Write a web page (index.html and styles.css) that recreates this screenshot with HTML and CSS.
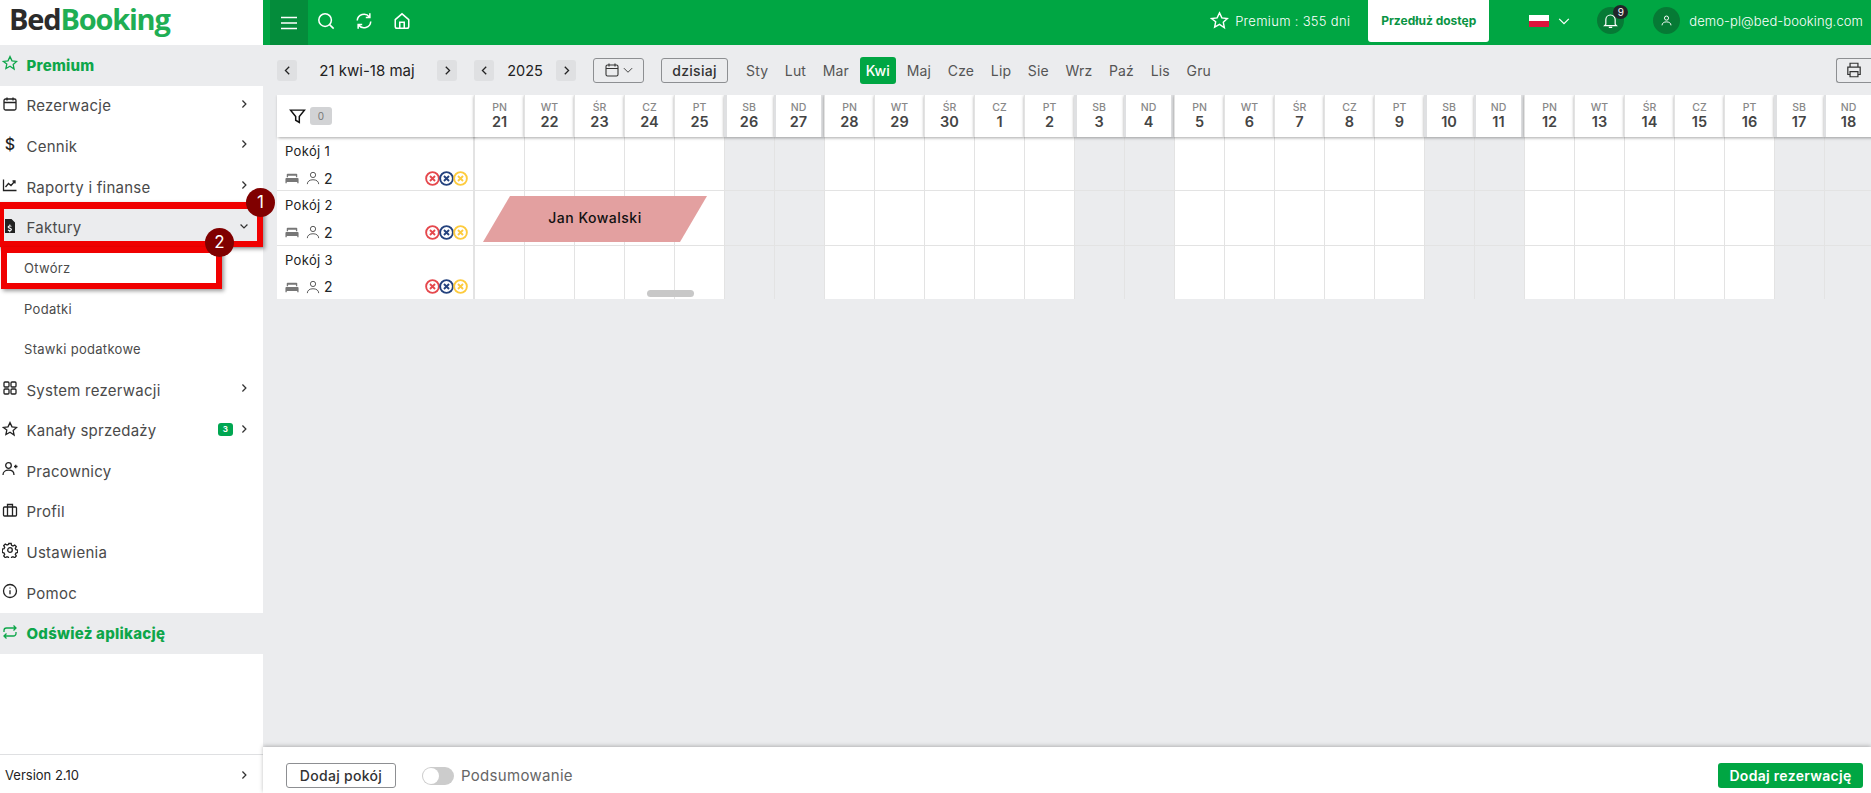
FILE: index.html
```html
<!DOCTYPE html>
<html lang="pl">
<head>
    <meta charset="UTF-8">
    <meta name="viewport" content="width=device-width, initial-scale=1.0">
    <title>BedBooking</title>
    <link rel="stylesheet" href="styles.css">
</head>
<body>
<svg class="sprite" width="0" height="0">
    <defs>
        <symbol id="i-star" viewBox="0 0 16 16"><path d="M8 1.600l2 4.200 4.600.6-3.400 3.100.9 4.600L8 11.300l-4.100 2.300.9-4.600L1.400 6.400 6 5.800z"/></symbol>
        <symbol id="i-calendar" viewBox="0 0 16 16"><rect x="2" y="3" width="12" height="11" rx="1.500"/><path d="M2 6.500h12M5 1.500v3M11 1.500v3"/></symbol>
        <symbol id="i-chart" viewBox="0 0 16 16"><path d="M1.500 2.500v11h13M3.500 10l3-3.500 2.500 2 4-4.500M10.500 4h2.500v2.500"/></symbol>
        <symbol id="i-grid" viewBox="0 0 16 16"><rect x="2" y="2" width="5" height="5" rx="1"/><rect x="9" y="2" width="5" height="5" rx="1"/><rect x="2" y="9" width="5" height="5" rx="1"/><rect x="9" y="9" width="5" height="5" rx="1"/></symbol>
        <symbol id="i-user-plus" viewBox="0 0 16 16"><circle cx="6.500" cy="4.500" r="2.800"/><path d="M1 14c0-3 2.400-4.800 5.500-4.800S12 11 12 14M12 5.500h3.500M13.750 3.750v3.500"/></symbol>
        <symbol id="i-case" viewBox="0 0 16 16"><rect x="1.500" y="5" width="13" height="9" rx="1"/><path d="M5.500 14V2.500h5V14"/></symbol>
        <symbol id="i-gear" viewBox="0 0 16 16"><circle cx="8" cy="8" r="2.300"/><path d="M6.800 1.500h2.400l.4 1.900 1.400.6 1.700-1 1.600 1.700-1 1.600.6 1.400 1.800.5v2.300l-1.800.5-.6 1.400 1 1.600-1.600 1.700-1.700-1-1.400.6-.4 1.800H6.800l-.4-1.800-1.400-.6-1.700 1-1.600-1.700 1-1.600-.6-1.400-1.800-.5V7.200l1.800-.5.6-1.400-1-1.600 1.600-1.700 1.700 1 1.400-.6z"/></symbol>
        <symbol id="i-info" viewBox="0 0 16 16"><circle cx="8" cy="8" r="6.500"/><path d="M8 7.200v4M8 4.600v1"/></symbol>
        <symbol id="i-repeat" viewBox="0 0 16 16"><path d="M2 8V6.500A2.500 2.500 0 0 1 4.500 4H14M11.500 1.500L14 4l-2.500 2.500M14 8v1.500A2.500 2.500 0 0 1 11.500 12H2M4.500 9.500L2 12l2.500 2.500"/></symbol>
        <symbol id="i-bed" viewBox="0 0 16 16"><path d="M3 3h10a1 1 0 0 1 1 1v3h-1.500V5.500h-9V7H2V4a1 1 0 0 1 1-1zM1.500 8h13A1 1 0 0 1 15.500 9v5H14v-1.500H2V14H.5V9a1 1 0 0 1 1-1z"/></symbol>
        <symbol id="i-person" viewBox="0 0 16 16"><circle cx="8" cy="4.500" r="3"/><path d="M1.500 15c0-3.300 2.800-5 6.500-5s6.500 1.700 6.500 5"/></symbol>
        <symbol id="i-x" viewBox="0 0 16 16"><circle cx="8" cy="8" r="6.800"/><path d="M5.300 5.300l5.400 5.400M10.700 5.300l-5.400 5.400"/></symbol>
        <symbol id="i-right" viewBox="0 0 16 16"><path d="M5.500 2.500L11 8l-5.500 5.500"/></symbol>
        <symbol id="i-left" viewBox="0 0 16 16"><path d="M10.500 2.500L5 8l5.500 5.500"/></symbol>
        <symbol id="i-down" viewBox="0 0 16 16"><path d="M2.500 5.500L8 11l5.500-5.500"/></symbol>
    </defs>
</svg>

<div class="app">
    <aside class="sidebar">
        <div class="logo"><span class="logo-bed">Bed</span><span class="logo-booking">Booking</span></div>
        <nav class="menu">
            <a class="menu-item highlight"><svg class="ico"><use href="#i-star"/></svg><span class="menu-label">Premium</span></a>
            <a class="menu-item"><svg class="ico"><use href="#i-calendar"/></svg><span class="menu-label">Rezerwacje</span><svg class="caret"><use href="#i-right"/></svg></a>
            <a class="menu-item"><span class="ico dollar">$</span><span class="menu-label">Cennik</span><svg class="caret"><use href="#i-right"/></svg></a>
            <a class="menu-item"><svg class="ico"><use href="#i-chart"/></svg><span class="menu-label">Raporty i finanse</span><svg class="caret"><use href="#i-right"/></svg></a>
            <a class="menu-item open"><svg class="ico" viewBox="0 0 16 16"><path class="solid" d="M3 1h6.500L13 4.500V15H3zM7.300 6.500v1c-1 .2-1.600.8-1.600 1.600 0 1 .8 1.400 1.900 1.700.8.200 1 .4 1 .7 0 .4-.4.600-1 .6-.5 0-1-.2-1.400-.5l-.5 1c.4.300.9.500 1.500.6v1h1.100v-1c1-.2 1.700-.8 1.700-1.700 0-1-.8-1.500-1.900-1.800-.8-.2-1-.3-1-.6 0-.3.300-.5.800-.5.400 0 .8.100 1.200.4l.5-1c-.4-.3-.8-.4-1.300-.5v-1z" fill-rule="evenodd"/></svg><span class="menu-label">Faktury</span><svg class="caret"><use href="#i-down"/></svg></a>
            <a class="menu-sub">Otwórz</a>
            <a class="menu-sub">Podatki</a>
            <a class="menu-sub">Stawki podatkowe</a>
            <a class="menu-item"><svg class="ico"><use href="#i-grid"/></svg><span class="menu-label">System rezerwacji</span><svg class="caret"><use href="#i-right"/></svg></a>
            <a class="menu-item"><svg class="ico"><use href="#i-star"/></svg><span class="menu-label">Kanały sprzedaży</span><span class="count">3</span><svg class="caret near"><use href="#i-right"/></svg></a>
            <a class="menu-item"><svg class="ico"><use href="#i-user-plus"/></svg><span class="menu-label">Pracownicy</span></a>
            <a class="menu-item"><svg class="ico"><use href="#i-case"/></svg><span class="menu-label">Profil</span></a>
            <a class="menu-item"><svg class="ico"><use href="#i-gear"/></svg><span class="menu-label">Ustawienia</span></a>
            <a class="menu-item"><svg class="ico"><use href="#i-info"/></svg><span class="menu-label">Pomoc</span></a>
            <a class="menu-item highlight"><svg class="ico"><use href="#i-repeat"/></svg><span class="menu-label">Odśwież aplikację</span></a>
        </nav>
        <div class="version"><span>Version 2.10</span><svg class="caret"><use href="#i-right"/></svg></div>
        <div class="mark mark-one"><span class="mark-num">1</span></div>
        <div class="mark mark-two"><span class="mark-num">2</span></div>
    </aside>

    <div class="main">
        <header class="topbar">
            <div class="burger"><svg viewBox="0 0 18 14"><path d="M1 1.500h16M1 7h16M1 12.500h16"/></svg></div>
            <svg class="top-ico" viewBox="0 0 20 20"><circle cx="9" cy="9" r="7"/><path d="M14 14l4.500 4.500"/></svg>
            <svg class="top-ico" viewBox="0 0 20 20"><path d="M2.500 9.500A7.500 7.500 0 0 1 16 5.500M17.500 10.500A7.500 7.500 0 0 1 4 14.500M16.500 1.500v4.500H12M3.500 18.500V14H8"/></svg>
            <svg class="top-ico" viewBox="0 0 20 20"><path d="M2.500 8.500L10 2l7.500 6.500V16a2 2 0 0 1-2 2h-11a2 2 0 0 1-2-2zM7.500 18v-6.500h5V18"/></svg>
            <div class="spacer"></div>
            <svg class="top-star"><use href="#i-star"/></svg>
            <span class="premium-days">Premium : 355 dni</span>
            <a class="extend">Przedłuż dostęp</a>
            <span class="flag"></span>
            <svg class="flag-caret"><use href="#i-down"/></svg>
            <div class="bell">
                <svg viewBox="0 0 20 20"><path d="M4.500 14.500V9a5.500 5.500 0 0 1 11 0v5.500l1.500 1.500H3zM8 18h4"/></svg>
                <span class="bell-num">9</span>
            </div>
            <div class="avatar"><svg><use href="#i-person"/></svg></div>
            <span class="user-mail">demo-pl@bed-booking.com</span>
        </header>

        <div class="toolbar">
            <button class="nav-btn"><svg><use href="#i-left"/></svg></button>
            <span class="range">21 kwi-18 maj</span>
            <button class="nav-btn"><svg><use href="#i-right"/></svg></button>
            <button class="nav-btn year-prev"><svg><use href="#i-left"/></svg></button>
            <span class="year">2025</span>
            <button class="nav-btn"><svg><use href="#i-right"/></svg></button>
            <button class="outline-btn cal-btn"><svg class="cal-ico"><use href="#i-calendar"/></svg><svg class="cal-caret"><use href="#i-down"/></svg></button>
            <button class="outline-btn today">dzisiaj</button>
            <div class="months" id="months"></div>
            <div class="spacer"></div>
            <button class="outline-btn print"><svg viewBox="0 0 16 16"><path d="M4.500 5.500V2h7v3.500M4.500 12H2.500V5.500h11V12h-2M4.500 9.500h7V14h-7z"/></svg></button>
        </div>

        <div class="calendar">
            <div class="room-col">
                <div class="filter-cell">
                    <svg viewBox="0 0 16 16"><path d="M1.500 2h13L9.700 8v5.500l-3.400-2V8z"/></svg>
                    <span class="filter-count">0</span>
                </div>
                <div id="rooms"></div>
            </div>
            <div class="days" id="days"></div>
            <div class="booking">Jan Kowalski</div>
            <div class="scroll-thumb"></div>
        </div>

        <footer class="bottom">
            <button class="outline-btn add-room">Dodaj pokój</button>
            <span class="switch"><span class="switch-knob"></span></span>
            <span class="switch-label">Podsumowanie</span>
            <div class="spacer"></div>
            <button class="add-booking">Dodaj rezerwację</button>
        </footer>
    </div>
</div>

<script>
    const months = ['Sty', 'Lut', 'Mar', 'Kwi', 'Maj', 'Cze', 'Lip', 'Sie', 'Wrz', 'Paź', 'Lis', 'Gru'];
    const monthBox = document.getElementById('months');
    for (let name of months) {
        let item = document.createElement('span');
        item.className = name === 'Kwi' ? 'month active' : 'month';
        item.textContent = name;
        monthBox.appendChild(item);
    }

    const rooms = document.getElementById('rooms');
    for (let nr of [1, 2, 3]) {
        let row = document.createElement('div');
        row.className = 'room';
        row.innerHTML = '<div class="room-name">Pokój ' + nr + '</div>' +
            '<div class="room-info"><svg class="bed"><use href="#i-bed"/></svg>' +
            '<svg class="guest"><use href="#i-person"/></svg><span class="guest-num">2</span>' +
            '<span class="room-marks"><svg class="x red"><use href="#i-x"/></svg>' +
            '<svg class="x navy"><use href="#i-x"/></svg><svg class="x yellow"><use href="#i-x"/></svg></span></div>';
        rooms.appendChild(row);
    }

    const names = ['PN', 'WT', 'ŚR', 'CZ', 'PT', 'SB', 'ND'];
    const dayNums = [21, 22, 23, 24, 25, 26, 27, 28, 29, 30, 1, 2, 3, 4, 5, 6, 7, 8, 9, 10, 11, 12, 13, 14, 15, 16, 17, 18];
    const days = document.getElementById('days');
    dayNums.forEach(function (nr, i) {
        let weekday = i % 7;
        let col = document.createElement('div');
        col.className = 'day';
        if (weekday === 5) {
            col.className += ' weekend saturday';
        }
        if (weekday === 6) {
            col.className += ' weekend sunday';
        }
        col.innerHTML = '<div class="day-head"><span class="day-name">' + names[weekday] + '</span>' +
            '<span class="day-nr">' + nr + '</span></div>' +
            '<div class="day-cell"></div><div class="day-cell"></div><div class="day-cell"></div>';
        days.appendChild(col);
    });
</script>
</body>
</html>
```

FILE: styles.css
```css
* {
  box-sizing: border-box;
}

html,
body {
  margin: 0;
  height: 100%;
  overflow: hidden;
}

body {
  font-family: "Inter", "Open Sans", sans-serif;
  color: #212529;
  background-color: #ebecee;
}

.sprite {
  display: block;
}

.spacer {
  flex: 1;
}

.app {
  display: flex;
  width: 1871px;
  height: 793px;
}

/* sidebar */

.sidebar {
  position: relative;
  display: flex;
  flex-direction: column;
  flex: none;
  width: 263px;
  background-color: #fff;
}

.logo {
  height: 45px;
  padding-left: 9px;
  font-family: "Open Sans", sans-serif;
  font-size: 29px;
  font-weight: 700;
  line-height: 38px;
  letter-spacing: -1.2px;
}

.logo-bed {
  color: #2b2b2b;
}

.logo-booking {
  color: #1fae54;
}

.menu {
  flex: 1;
}

.menu-item {
  display: flex;
  align-items: center;
  height: 40.6px;
  padding-right: 14px;
  color: #4a4a4a;
  font-size: 15px;
  letter-spacing: 0.25px;
}

.menu-item.highlight {
  background-color: #ebecee;
  color: #0ea64a;
  font-weight: 800;
}

.menu-item.open {
  background-color: #ebecee;
}

.ico {
  flex: none;
  width: 16px;
  height: 16px;
  margin: 0 8.5px 4px 2px;
  fill: none;
  stroke: #222;
  stroke-width: 1.3;
}

.highlight .ico {
  stroke: #0ea64a;
}

.ico .solid {
  fill: #222;
  stroke: none;
}

.dollar {
  color: #222;
  font-size: 16px;
  font-weight: 500;
  line-height: 16px;
  text-align: center;
}

.menu-label {
  flex: 1;
}

.caret {
  flex: none;
  width: 10px;
  height: 10px;
  margin-bottom: 4px;
  fill: none;
  stroke: #333;
  stroke-width: 2;
}

.caret.near {
  margin-left: 6px;
}

.count {
  width: 15px;
  height: 13px;
  margin-bottom: 2px;
  border-radius: 3px;
  background-color: #00a651;
  color: #fff;
  font-size: 8px;
  font-weight: 700;
  line-height: 13px;
  text-align: center;
}

.menu-sub {
  display: block;
  height: 40.6px;
  padding-left: 24px;
  color: #4a4a4a;
  font-size: 13px;
  line-height: 40px;
  letter-spacing: 0.3px;
}

.version {
  display: flex;
  align-items: center;
  justify-content: space-between;
  height: 39px;
  padding: 2px 14px 0 5px;
  border-top: 1px solid #dfe0e2;
  color: #222;
  font-size: 13px;
}

.version .caret {
  margin-bottom: 0;
}

.mark {
  position: absolute;
  border-style: solid;
  border-color: #f00000;
  box-shadow: 2px 2px 4px rgba(0, 0, 0, 0.4);
}

.mark-one {
  left: -3px;
  top: 202px;
  width: 266px;
  height: 45px;
  border-width: 7px 6px 6px 7px;
}

.mark-two {
  left: 1px;
  top: 247px;
  width: 221px;
  height: 42px;
  border-width: 6px;
}

.mark-num {
  position: absolute;
  width: 29px;
  height: 29px;
  border-radius: 50%;
  background-color: #800000;
  color: #fff;
  font-size: 17px;
  line-height: 29px;
  text-align: center;
}

.mark-one .mark-num {
  right: -18px;
  top: -21px;
}

.mark-two .mark-num {
  right: -18px;
  top: -25px;
}

/* top bar */

.main {
  display: flex;
  flex-direction: column;
  flex: 1;
  min-width: 0;
}

.topbar {
  display: flex;
  align-items: center;
  flex: none;
  height: 45px;
  padding: 0 8px 4px 7px;
  background-color: #00a643;
  color: #fff;
}

.burger {
  display: flex;
  align-items: center;
  justify-content: center;
  align-self: flex-start;
  width: 38px;
  height: 45px;
  margin-right: 9px;
  background-color: #048c3b;
}

.burger svg {
  width: 18px;
  height: 14px;
  fill: none;
  stroke: #fff;
  stroke-width: 1.5;
}

.top-ico {
  width: 18px;
  height: 18px;
  margin-right: 20px;
  fill: none;
  stroke: #fff;
  stroke-width: 1.7;
}

.top-star {
  width: 19px;
  height: 19px;
  margin-right: 6px;
  fill: none;
  stroke: #fff;
  stroke-width: 1.2;
}

.premium-days {
  margin-right: 18px;
  font-size: 13px;
  font-weight: 300;
  letter-spacing: 0.3px;
}

.extend {
  align-self: flex-start;
  width: 121px;
  height: 42px;
  border-radius: 0 0 3px 3px;
  background-color: #fff;
  color: #0a9444;
  font-size: 12px;
  font-weight: 700;
  line-height: 41px;
  text-align: center;
  white-space: nowrap;
}

.flag {
  width: 20px;
  height: 12px;
  margin-left: 40px;
  background: linear-gradient(#fff 50%, #dc143c 50%);
}

.flag-caret {
  width: 14px;
  height: 14px;
  margin-left: 8px;
  fill: none;
  stroke: #fff;
  stroke-width: 1.4;
}

.bell {
  position: relative;
  display: flex;
  align-items: center;
  justify-content: center;
  width: 27px;
  height: 27px;
  margin-left: 26px;
  border-radius: 50%;
  background-color: #067a35;
}

.bell svg {
  width: 17px;
  height: 17px;
  fill: none;
  stroke: #fff;
  stroke-width: 1.4;
}

.bell-num {
  position: absolute;
  top: -2px;
  right: -4px;
  width: 15px;
  height: 14px;
  border-radius: 50%;
  background-color: #212529;
  font-size: 10px;
  line-height: 14px;
  text-align: center;
}

.avatar {
  display: flex;
  align-items: center;
  justify-content: center;
  width: 27px;
  height: 27px;
  margin-left: 29px;
  border-radius: 50%;
  background-color: #067a35;
}

.avatar svg {
  width: 11px;
  height: 11px;
  fill: none;
  stroke: #fff;
  stroke-width: 1.4;
}

.user-mail {
  margin-left: 9px;
  font-size: 13px;
  font-weight: 300;
  letter-spacing: 0.1px;
}

/* toolbar */

.toolbar {
  display: flex;
  align-items: center;
  flex: none;
  height: 50px;
  padding-left: 14px;
}

button {
  padding: 0;
  font-family: inherit;
}

.nav-btn {
  display: flex;
  align-items: center;
  justify-content: center;
  width: 20px;
  height: 21px;
  border: 0;
  border-radius: 3px;
  background-color: #dfe0e2;
}

.nav-btn svg {
  width: 11px;
  height: 11px;
  fill: none;
  stroke: #222;
  stroke-width: 1.9;
}

.range {
  width: 140px;
  font-size: 15px;
  text-align: center;
  color: #222;
}

.year-prev {
  margin-left: 17px;
}

.year {
  width: 62px;
  font-size: 14.5px;
  text-align: center;
  color: #222;
}

.outline-btn {
  border: 1px solid #8d8f92;
  border-radius: 3px;
  background-color: transparent;
  color: #333;
}

.cal-btn {
  display: flex;
  align-items: center;
  justify-content: center;
  width: 51px;
  height: 25px;
  margin-left: 17px;
}

.cal-ico {
  width: 16px;
  height: 16px;
  fill: none;
  stroke: #333;
  stroke-width: 1.1;
}

.cal-caret {
  width: 12px;
  height: 12px;
  margin-left: 2px;
  fill: none;
  stroke: #333;
  stroke-width: 1.2;
}

.today {
  width: 67px;
  height: 25px;
  margin-left: 17px;
  font-size: 14px;
  font-weight: 500;
  letter-spacing: 0.3px;
}

.months {
  display: flex;
  align-items: center;
  gap: 4.7px;
  margin-left: 12px;
}

.month {
  padding: 5px 6px;
  border-radius: 3px;
  color: #555;
  font-size: 14px;
  line-height: 17px;
  letter-spacing: 0.15px;
}

.month.active {
  background-color: #00a643;
  color: #fff;
  font-weight: 500;
}

.print {
  display: flex;
  align-items: center;
  justify-content: center;
  width: 35px;
  height: 25px;
  border-radius: 3px 0 0 3px;
  border-right: 0;
}

.print svg {
  width: 18px;
  height: 18px;
  fill: none;
  stroke: #333;
  stroke-width: 1.1;
}

/* calendar */

.calendar {
  position: relative;
  display: flex;
  flex: 1;
  align-items: flex-start;
  padding-left: 14px;
  overflow: hidden;
}

.room-col {
  flex: none;
  width: 197px;
  background-color: #fff;
}

.filter-cell {
  position: relative;
  display: flex;
  align-items: center;
  height: 42px;
  padding-left: 12px;
  box-shadow: 1px 1px 3px rgba(0, 0, 0, 0.35);
}

.filter-cell svg {
  width: 17px;
  height: 17px;
  fill: none;
  stroke: #111;
  stroke-width: 1.4;
}

.filter-count {
  width: 22px;
  height: 18px;
  margin-left: 4px;
  border-radius: 3px;
  background-color: #d2d3d5;
  color: #777;
  font-size: 10px;
  line-height: 18px;
  text-align: center;
}

.room {
  height: 54.4px;
  padding: 4px 8px 0;
  border-bottom: 1px solid #e3e3e3;
  border-right: 1px solid #e3e3e3;
}

.room:last-child {
  height: 53px;
  border-bottom: 0;
}

.room-name {
  height: 28px;
  color: #222;
  font-size: 13px;
  line-height: 20px;
  letter-spacing: 0.35px;
}

.room-info {
  display: flex;
  align-items: center;
  height: 18px;
}

.bed {
  width: 14px;
  height: 14px;
  fill: #777;
}

.guest {
  width: 14px;
  height: 14px;
  margin-left: 7px;
  fill: none;
  stroke: #444;
  stroke-width: 1;
}

.guest-num {
  margin-left: 4px;
  font-size: 14px;
}

.room-marks {
  display: flex;
  margin-left: auto;
  margin-right: -3px;
}

.x {
  width: 15px;
  height: 15px;
  margin-left: -1px;
  fill: none;
  stroke-width: 2;
}

.x.red {
  stroke: #e5484d;
}

.x.navy {
  stroke: #24427e;
}

.x.yellow {
  stroke: #fdcb3e;
}

.days {
  display: flex;
  flex: none;
}

.day {
  flex: none;
  width: 50px;
}

.day-head {
  position: relative;
  display: flex;
  flex-direction: column;
  align-items: center;
  height: 42px;
  padding-top: 7px;
  background-color: #fff;
  border-left: 1px solid #e3e3e3;
  box-shadow: 0 1px 3px rgba(0, 0, 0, 0.35);
}

.saturday .day-head {
  border-left: 3px solid #dfe0e2;
  padding-right: 3px;
}

.sunday .day-head {
  border-left: 2px solid #dfe0e2;
  border-right: 3px solid #dfe0e2;
}

.day-name {
  color: #888;
  font-size: 10.5px;
  font-weight: 500;
  line-height: 11px;
}

.day-nr {
  color: #444;
  font-size: 14.5px;
  font-weight: 600;
  line-height: 17px;
}

.day-cell {
  height: 54.4px;
  background-color: #fff;
  border-left: 1px solid #e3e3e3;
  border-bottom: 1px solid #e3e3e3;
}

.day-cell:last-child {
  height: 53px;
  border-bottom: 0;
}

.weekend .day-cell {
  background-color: #ebecee;
}

.booking {
  position: absolute;
  left: 220px;
  top: 101px;
  width: 224px;
  height: 46px;
  background-color: #e3a0a0;
  clip-path: polygon(27px 0, 100% 0, 197px 100%, 0 100%);
  color: #111;
  font-size: 14px;
  font-weight: 500;
  line-height: 44px;
  letter-spacing: 0.5px;
  text-align: center;
}

.scroll-thumb {
  position: absolute;
  left: 384px;
  top: 195px;
  width: 47px;
  height: 7px;
  border-radius: 4px;
  background-color: #c8c8c8;
}

/* bottom bar */

.bottom {
  position: relative;
  display: flex;
  align-items: center;
  flex: none;
  height: 46px;
  padding: 11px 8px 0 23px;
  background-color: #fff;
  box-shadow: 0 -1px 4px rgba(0, 0, 0, 0.25);
}

.add-room {
  width: 110px;
  height: 25px;
  font-size: 14px;
  font-weight: 500;
  letter-spacing: 0.3px;
}

.switch {
  width: 32px;
  height: 18px;
  margin-left: 26px;
  padding: 1px;
  border-radius: 9px;
  background-color: #ccc;
}

.switch-knob {
  display: block;
  width: 16px;
  height: 16px;
  border-radius: 50%;
  background-color: #fff;
}

.switch-label {
  margin-left: 7px;
  color: #666;
  font-size: 15px;
  letter-spacing: 0.3px;
}

.add-booking {
  width: 145px;
  height: 25px;
  border: 0;
  border-radius: 3px;
  background-color: #00a643;
  color: #fff;
  font-size: 14px;
  font-weight: 600;
  letter-spacing: 0.3px;
}
```
